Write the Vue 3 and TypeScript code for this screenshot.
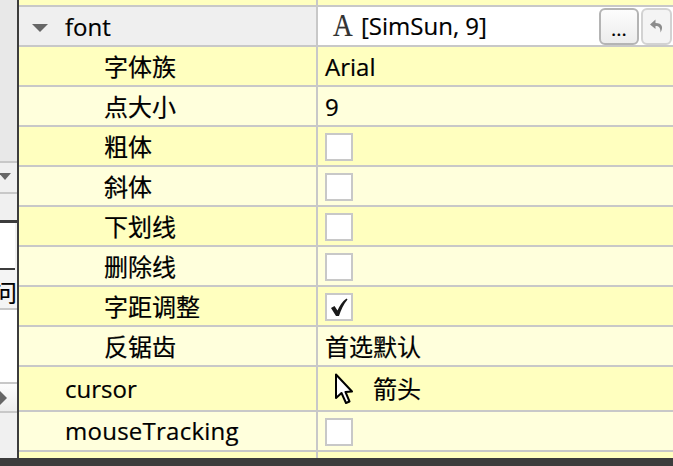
<script setup lang="ts">
interface Row {
  name: string
  indent?: boolean
  value?: string
  check?: boolean
  checked?: boolean
  cursor?: boolean
}

const rows: Row[] = [
  { name: '字体族', indent: true, value: 'Arial' },
  { name: '点大小', indent: true, value: '9' },
  { name: '粗体', indent: true, check: true },
  { name: '斜体', indent: true, check: true },
  { name: '下划线', indent: true, check: true },
  { name: '删除线', indent: true, check: true },
  { name: '字距调整', indent: true, check: true, checked: true },
  { name: '反锯齿', indent: true, value: '首选默认' },
  { name: 'cursor', cursor: true },
  { name: 'mouseTracking', check: true },
]
</script>

<template>
  <div class="screen">
    <div class="side">
      <div class="side-top"></div>
      <div class="side-combo">
        <span class="side-arrow-down"></span>
      </div>
      <div class="side-gap"></div>
      <div class="side-white"></div>
      <div class="side-label"><span class="side-char">问</span></div>
      <div class="side-list"></div>
      <div class="side-bottom">
        <span class="side-arrow-right"></span>
      </div>
      <div class="side-rest"></div>
    </div>
    <div class="table">
      <div class="row odd top-row">
        <div class="name"></div>
        <div class="value"></div>
      </div>
      <div class="row font-row">
        <div class="name group">
          <span class="expander"></span>
          <span>font</span>
        </div>
        <div class="value font-value">
          <span class="font-glyph">A</span>
          <span class="font-text">[SimSun, 9]</span>
          <button class="btn more">...</button>
          <button class="btn reset">
            <svg width="16" height="16" viewBox="0 0 16 16">
              <path d="M6.5 1.5 L1 6.5 L6.5 11 V8 C10 8 11.5 9.5 11.5 14.5 C14.5 9.5 13.5 5 6.5 5 Z" fill="#8c8c8c" />
            </svg>
          </button>
        </div>
      </div>
      <div v-for="(row, i) in rows" :key="row.name" class="row" :class="[i % 2 === 0 ? 'odd' : 'even', { tall: row.cursor }]">
        <div class="name" :class="{ indent: row.indent, wide: row.name === 'mouseTracking' }">{{ row.name }}</div>
        <div class="value">
          <span v-if="row.check" class="check">
            <svg v-if="row.checked" width="24" height="24" viewBox="0 0 24 24">
              <path d="M4 13 L7.5 11 L10.5 15.5 C12.5 11 15 6.5 19.5 3.5 L20.5 4.5 C16.5 9 14 15 12 21 L9 21 Z" fill="#1a1a1a" />
            </svg>
          </span>
          <template v-else-if="row.cursor">
            <svg class="arrow" width="19" height="32" viewBox="0 0 19 32">
              <path d="M2 1.5 V25 L7.5 20 L12 30 L15.5 28.5 L11.5 19 L18 18.5 Z" fill="#fff" stroke="#000" stroke-width="2" stroke-linejoin="round" />
            </svg>
            <span class="cursor-text">箭头</span>
          </template>
          <template v-else>{{ row.value }}</template>
        </div>
      </div>
      <div class="row odd last-row">
        <div class="name"></div>
        <div class="value"></div>
      </div>
    </div>
    <div class="footer"></div>
  </div>
</template>

<style>
html, body {
  margin: 0;
  background: #f0f0f0;
}
</style>

<style scoped>
.screen {
  width: 673px;
  height: 466px;
  position: relative;
  overflow: hidden;
  display: flex;
  font-family: "Open Sans", "Noto Sans", "Noto Sans CJK SC", sans-serif;
  font-size: 24px;
  color: #000;
  background: #f0f0f0;
  -webkit-text-stroke: 0.2px #000;
}

.side {
  width: 17px;
  flex: none;
  display: flex;
  flex-direction: column;
  background: #f0f0f0;
  border-right: 2px solid #3c3c3c;
}

.side-top {
  height: 161px;
  flex: none;
  background: #e8e8e8;
  border-bottom: 2px solid #c8c8c8;
}

.side-combo {
  height: 29px;
  flex: none;
  display: flex;
  align-items: center;
  background: #f0f0f0;
  border-bottom: 2px solid #c8c8c8;
}

.side-arrow-down {
  width: 0;
  height: 0;
  margin: 0 0 2px -1px;
  border-left: 6px solid transparent;
  border-right: 6px solid transparent;
  border-top: 7px solid #666;
}

.side-gap {
  height: 26px;
  flex: none;
  background: #f0f0f0;
  border-bottom: 3px solid #3c3c3c;
}

.side-white {
  height: 45px;
  flex: none;
  width: 15px;
  background: #fff;
  border-bottom: 2px solid #3c3c3c;
}

.side-label {
  height: 38px;
  flex: none;
  overflow: hidden;
  display: flex;
  justify-content: flex-end;
  align-items: flex-end;
  background: #f4f4f4;
  border-bottom: 2px solid #c8c8c8;
}

.side-char {
  flex: none;
  line-height: 30px;
}

.side-list {
  height: 72px;
  flex: none;
  background: #fff;
  border-bottom: 2px solid #c8c8c8;
}

.side-rest {
  flex: 1;
  background: #f0f0f0;
}

.side-bottom {
  height: 27px;
  flex: none;
  display: flex;
  align-items: center;
  background: linear-gradient(#fdfdfd, #ececec);
  border-bottom: 2px solid #c8c8c8;
}

.side-arrow-right {
  width: 0;
  height: 0;
  border-top: 7px solid transparent;
  border-bottom: 7px solid transparent;
  border-left: 7px solid #666;
}

.table {
  flex: 1;
  min-width: 0;
  display: flex;
  flex-direction: column;
}

.row {
  display: flex;
  height: 38px;
  flex: none;
  border-bottom: 2px solid #c8c8c8;
}

.row.tall {
  height: 43px;
}

.row.tall .name {
  line-height: 44px;
}

.row.odd {
  background: #ffffbf;
}

.row.even {
  background: #ffffdc;
}

.top-row {
  height: 5px;
}

.font-row {
  background: #efefef;
}

.last-row {
  height: 20px;
  border-bottom: 0;
}

.name {
  width: 299px;
  flex: none;
  box-sizing: border-box;
  padding-left: 46px;
  border-right: 2px solid #c8c8c8;
  line-height: 40px;
  white-space: nowrap;
}

.name.indent {
  padding-left: 85px;
}

.name.wide {
  letter-spacing: 0.25px;
  line-height: 38px;
}

.name.group {
  position: relative;
}

.expander {
  position: absolute;
  left: 13px;
  top: 17px;
  width: 0;
  height: 0;
  border-left: 8px solid transparent;
  border-right: 8px solid transparent;
  border-top: 8px solid #666;
}

.value {
  flex: 1;
  min-width: 0;
  display: flex;
  align-items: center;
  padding-left: 7px;
  padding-top: 1px;
  box-sizing: border-box;
  line-height: 38px;
  white-space: nowrap;
}

.font-value {
  background: #fff;
  padding-left: 15px;
  padding-top: 0;
  gap: 9px;
}

.font-glyph {
  font-family: "Liberation Serif", serif;
  width: 19px;
  color: #333;
  font-size: 31px;
  transform: scaleX(0.88);
  transform-origin: left center;
}

.font-text {
  flex: 1;
}

.btn {
  width: 40px;
  height: 37px;
  margin: 0;
  padding: 0;
  box-sizing: border-box;
  border: 2px solid #b4b4b4;
  border-radius: 6px;
  background: linear-gradient(#fdfdfd, #ececec);
  display: flex;
  align-items: center;
  justify-content: center;
  font-family: inherit;
  font-size: 20px;
  color: #000;
}

.btn.more {
  padding-top: 4px;
}

.btn.reset {
  width: 31px;
  margin-left: -7px;
  margin-right: 1px;
  border-color: #d2d2d2;
  background: #f4f4f4;
}

.check {
  width: 28px;
  height: 28px;
  box-sizing: border-box;
  border: 2px solid #c8c8c8;
  background: #fff;
  display: flex;
  align-items: center;
  justify-content: center;
}

.arrow {
  margin-left: 9px;
}

.cursor-text {
  margin-left: 20px;
}

.footer {
  position: absolute;
  left: 0;
  right: 0;
  bottom: 0;
  height: 8px;
  background: #3c3c3c;
}
</style>
